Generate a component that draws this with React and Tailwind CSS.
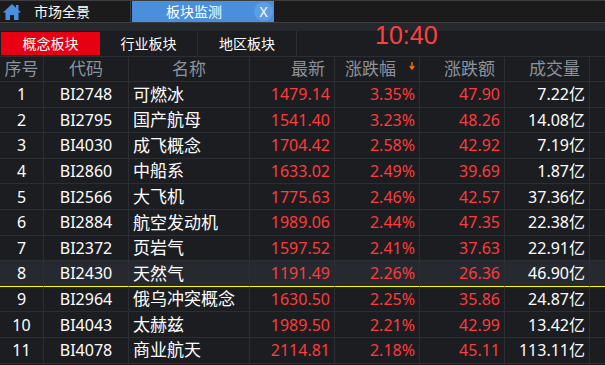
import React from "react";

const rows = [
  ["1", "BI2748", "可燃冰", "1479.14", "3.35%", "47.90", "7.22亿"],
  ["2", "BI2795", "国产航母", "1541.40", "3.23%", "48.26", "14.08亿"],
  ["3", "BI4030", "成飞概念", "1704.42", "2.58%", "42.92", "7.19亿"],
  ["4", "BI2860", "中船系", "1633.02", "2.49%", "39.69", "1.87亿"],
  ["5", "BI2566", "大飞机", "1775.63", "2.46%", "42.57", "37.36亿"],
  ["6", "BI2884", "航空发动机", "1989.06", "2.44%", "47.35", "22.38亿"],
  ["7", "BI2372", "页岩气", "1597.52", "2.41%", "37.63", "22.91亿"],
  ["8", "BI2430", "天然气", "1191.49", "2.26%", "26.36", "46.90亿"],
  ["9", "BI2964", "俄乌冲突概念", "1630.50", "2.25%", "35.86", "24.87亿"],
  ["10", "BI4043", "太赫兹", "1989.50", "2.21%", "42.99", "13.42亿"],
  ["11", "BI4078", "商业航天", "2114.81", "2.18%", "45.11", "113.11亿"],
];

const cell = "border-r border-b border-[#2b2e33] flex items-center";
const head = "h-[25px] text-[17px] text-[#8b939c]";

function HomeIcon() {
  return (
    <svg width="20" height="18" viewBox="0 0 20 18">
      <path d="M10 1 L1 9.5 L3.5 9.5 L3.5 17 L8 17 L8 12 L12 12 L12 17 L16.5 17 L16.5 9.5 L19 9.5 Z" fill="#4a90dc" />
      <rect x="14" y="2" width="2.5" height="5" fill="#4a90dc" />
    </svg>
  );
}

export default function App() {
  return (
    <div
      className="w-[605px] h-[365px] overflow-hidden bg-[#1b1d21] text-white"
      style={{ fontFamily: '"Noto Sans", "Noto Sans CJK SC", sans-serif' }}
    >
      {/* Top tabs */}
      <div className="h-[23px] border-t border-b border-[#3e3e3e] bg-[#1b1b1b] flex">
        <div className="w-[131px] flex items-center border-r border-[#3e3e3e]">
          <div className="ml-[2px] mr-[12px] flex items-center">
            <HomeIcon />
          </div>
          <span className="text-[14px] leading-none">市场全景</span>
        </div>
        <div className="w-[142px] ml-[1px] bg-[#4a8fdc] flex items-center relative">
          <span className="text-[14px] leading-none ml-[34px]">板块监测</span>
          <span className="absolute right-[1px] top-[1px] w-[19px] h-[19px] rounded-full bg-[#5e9de3] flex items-center justify-center text-[14px] leading-none">
            X
          </span>
        </div>
      </div>
      <div className="h-[8px] bg-[#25292e]" />

      {/* Sub tabs */}
      <div className="h-[26px] flex border-b border-[#2b2e33] relative">
        <div className="w-[99px] ml-[1px] mt-[1px] h-[23px] bg-[#e60012] flex items-center justify-center text-[14px]">
          概念板块
        </div>
        <div className="w-[98px] flex items-center justify-center text-[14px] border-r border-[#2b2e33]">
          行业板块
        </div>
        <div className="w-[99px] flex items-center justify-center text-[14px] border-r border-[#2b2e33]">
          地区板块
        </div>
        <div
          className="absolute left-[375px] top-[-8px] text-[25px] text-[#ff4040] leading-none"
          style={{ fontFamily: '"Liberation Sans", sans-serif' }}
        >
          10:40
        </div>
      </div>

      {/* Table */}
      <div className="grid grid-cols-[44px_85px_121px_85px_85px_85px_85px_1fr] text-[16px]">
        <div className={`${cell} ${head} justify-center`}>序号</div>
        <div className={`${cell} ${head} justify-center`}>代码</div>
        <div className={`${cell} ${head} justify-center`}>名称</div>
        <div className={`${cell} ${head} justify-end pr-[9px]`}>最新</div>
        <div className={`${cell} ${head} justify-end pr-[4px]`}>
          涨跌幅
          <svg width="6" height="8" viewBox="0 0 6 8" className="ml-[13px] mb-[7px]">
            <path d="M3 0 V6.5 M0.8 4 L3 7 L5.2 4" stroke="#ff6a10" strokeWidth="1.4" fill="none" />
          </svg>
        </div>
        <div className={`${cell} ${head} justify-end pr-[9px]`}>涨跌额</div>
        <div className={`${cell} ${head} justify-end pr-[9px]`}>成交量</div>
        <div className="border-b border-[#2b2e33] h-[25px]" />

        {rows.map((r, i) => {
          const hl = i === 7;
          const bg = hl ? "bg-[#262a30] border-b-[#ffff00]" : "";
          return (
            <React.Fragment key={r[0]}>
              <div className={`${cell} ${bg} h-[25.6px] justify-center`}>{r[0]}</div>
              <div className={`${cell} ${bg} h-[25.6px] justify-center`}>{r[1]}</div>
              <div className={`${cell} ${bg} h-[25.6px] pl-[4px] text-[17px]`}>{r[2]}</div>
              <div className={`${cell} ${bg} h-[25.6px] justify-end pr-[4px] text-[#ff3b3b]`}>{r[3]}</div>
              <div className={`${cell} ${bg} h-[25.6px] justify-end pr-[4px] text-[#ff3b3b]`}>{r[4]}</div>
              <div className={`${cell} ${bg} h-[25.6px] justify-end pr-[4px] text-[#ff3b3b]`}>{r[5]}</div>
              <div className={`${cell} ${bg} h-[25.6px] justify-end pr-[4px]`}>{r[6]}</div>
              <div className={`border-b border-[#2b2e33] ${bg} h-[25.6px]`} />
            </React.Fragment>
          );
        })}
      </div>
    </div>
  );
}
